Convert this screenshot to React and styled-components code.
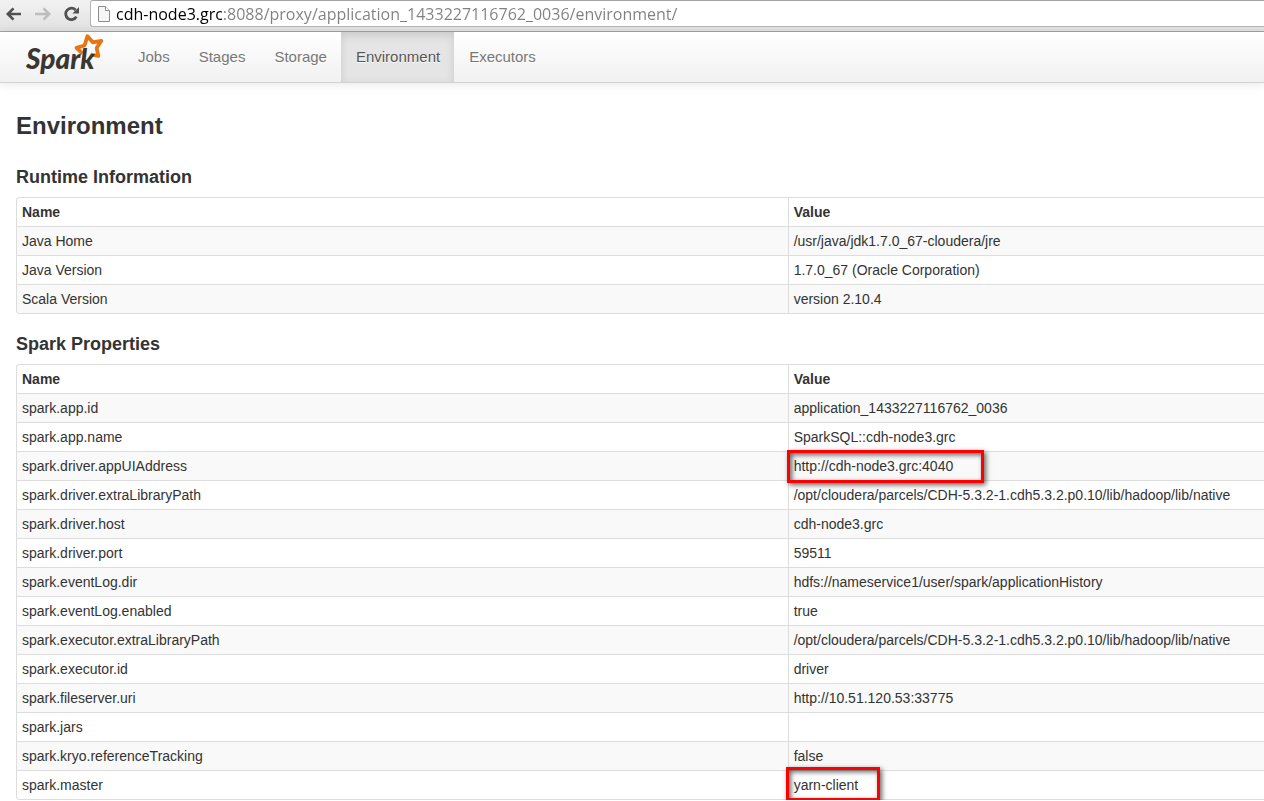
import React from 'react';
import styled, { createGlobalStyle, css } from 'styled-components';

const GlobalStyle = createGlobalStyle`
  *, *::before, *::after { box-sizing: border-box; }
  html { overflow-x: hidden; }
  body {
    margin: 0;
    background: #fff;
    color: #333;
    font: 14px/20px "Liberation Sans", Arial, sans-serif;
  }
`;

const Toolbar = styled.header`
  display: flex;
  height: 32px;
  padding-bottom: 4px;
  background: linear-gradient(#f2f2f2, #e1e1e1);
  border-bottom: 1px solid #a3a3a3;
`;

const ToolButtons = styled.div`
  display: flex;
  align-items: center;
  gap: 11px;
  width: 90px;
  padding-left: 5px;
  flex: none;
`;

const ToolButton = styled.button`
  display: flex;
  padding: 0;
  border: 0;
  background: none;
  color: ${(p) => (p.disabled ? '#bdbdbd' : '#505050')};
`;

const AddressBar = styled.label`
  display: flex;
  align-items: center;
  flex: 1;
  min-width: 0;
  padding-left: 7px;
  background: #fff;
  border: 1px solid #b4b4b4;
  border-top-color: #a3a3a3;
  border-right: 0;
  border-radius: 3px 0 0 3px;
`;

const AddressInput = styled.input`
  flex: 1;
  min-width: 0;
  height: 24px;
  margin-left: 6px;
  padding: 0;
  border: 0;
  outline: 0;
  font: 16px/24px "Open Sans", "Noto Sans", sans-serif;
  color: transparent;
  background: linear-gradient(90deg, #000 106px, #808080 106px);
  background-clip: text;
`;

const Navbar = styled.nav`
  display: flex;
  height: 51px;
  padding-left: 25px;
  background: linear-gradient(#fff, #f1f1f1);
  border-bottom: 1px solid #d2d2d2;
  box-shadow: 0 1px 10px rgba(0, 0, 0, 0.1);
`;

const Brand = styled.a`
  display: block;
  width: 98px;
  padding-top: 1px;
`;

const NavLink = styled.a`
  padding: 15px 14px 15px 15px;
  font-size: 15px;
  line-height: 20px;
  color: #777;
  text-decoration: none;
  text-shadow: 0 1px 0 #fff;
  ${(p) =>
    p.$active &&
    css`
      color: #555;
      background: #e5e5e5;
      box-shadow: inset 0 3px 8px rgba(0, 0, 0, 0.125);
    `}
`;

const Content = styled.main`
  padding: 23px 0 0 16px;
`;

const PageTitle = styled.h1`
  margin: 0 0 21px;
  font-size: 24px;
  line-height: 40px;
`;

const SectionTitle = styled.h2`
  margin: 0 0 10px;
  font-size: 18px;
  line-height: 20px;
`;

const Section = styled.section`
  & + & { margin-top: 20px; }
`;

const DataTable = styled.table`
  width: 100%;
  table-layout: fixed;
  border-collapse: separate;
  border-spacing: 0;
  border: 1px solid #ddd;
  border-right: 0;
  border-radius: 4px 0 0 4px;
`;

const cell = css`
  position: relative;
  padding: 4px 5px;
  height: 29px;
  text-align: left;
  border-top: 1px solid #ddd;
  &:first-child { width: 61.8%; }
  & + & { border-left: 1px solid #ddd; }
`;

const HeadCell = styled.th`
  ${cell}
  height: 28px;
  border-top: 0;
`;

const Cell = styled.td`
  ${cell}
`;

const Row = styled.tr`
  &:nth-child(odd) > td { background: #f9f9f9; }
  &:last-child > td:first-child { border-bottom-left-radius: 4px; }
`;

const Marker = styled.span`
  position: absolute;
  z-index: 1;
  top: ${(p) => (p.$tall ? -4 : -2)}px;
  left: ${(p) => (p.$tall ? -3 : -2)}px;
  width: ${(p) => (p.$tall ? 94 : 197)}px;
  height: ${(p) => (p.$tall ? 34 : 33)}px;
  border: 3px solid #f00;
  box-shadow: 2px 2px 5px rgba(0, 0, 0, 0.6), inset 2px 2px 5px rgba(0, 0, 0, 0.6);
  pointer-events: none;
`;

function ArrowIcon({ flip }) {
  return (
    <svg width="18" height="16" viewBox="0 0 18 16" fill="none" stroke="currentColor" strokeWidth="2.6">
      <path d={flip ? 'M1 8H15M9.5 2.3L15.2 8L9.5 13.7' : 'M16 8H3M8.5 2.3L2.8 8L8.5 13.7'} />
    </svg>
  );
}

function ReloadIcon() {
  return (
    <svg width="18" height="16" viewBox="0 0 18 16">
      <path d="M13.4 10.6A5.7 5.7 0 1 1 12.6 4" fill="none" stroke="currentColor" strokeWidth="2.8" />
      <path d="M16 1V7.6H9.4Z" fill="currentColor" />
    </svg>
  );
}

function PageIcon() {
  return (
    <svg width="12" height="16" viewBox="0 0 12 16">
      <path d="M.5 .5H7.5L11.5 4.5V15.5H.5Z" fill="#f6f6f6" stroke="#8c8c8c" />
      <path d="M7.5 .5V4.5H11.5" fill="#fff" stroke="#8c8c8c" />
    </svg>
  );
}

function SparkLogo() {
  return (
    <svg width="80" height="46" viewBox="0 0 80 46" role="img" aria-label="Spark">
      <path
        d="M57.500 20.500L51.500 14.800L59.500 12.500L62.500 3.200L67.800 9.300L76.300 7.800L71.700 15L73.300 23L65.500 21.500"
        fill="none"
        stroke="#e87511"
        strokeWidth="3.800"
        strokeLinejoin="round"
      />
      <text x="1" y="36" fontFamily="Lato" fontWeight="900" fontStyle="italic" fontSize="28" fill="#3a3632">
        Spark
      </text>
    </svg>
  );
}

const tabs = ['Jobs', 'Stages', 'Storage', 'Environment', 'Executors'];

const runtime = [
  ['Java Home', '/usr/java/jdk1.7.0_67-cloudera/jre'],
  ['Java Version', '1.7.0_67 (Oracle Corporation)'],
  ['Scala Version', 'version 2.10.4'],
];

const properties = [
  ['spark.app.id', 'application_1433227116762_0036'],
  ['spark.app.name', 'SparkSQL::cdh-node3.grc'],
  ['spark.driver.appUIAddress', 'http://cdh-node3.grc:4040', 'wide'],
  ['spark.driver.extraLibraryPath', '/opt/cloudera/parcels/CDH-5.3.2-1.cdh5.3.2.p0.10/lib/hadoop/lib/native'],
  ['spark.driver.host', 'cdh-node3.grc'],
  ['spark.driver.port', '59511'],
  ['spark.eventLog.dir', 'hdfs://nameservice1/user/spark/applicationHistory'],
  ['spark.eventLog.enabled', 'true'],
  ['spark.executor.extraLibraryPath', '/opt/cloudera/parcels/CDH-5.3.2-1.cdh5.3.2.p0.10/lib/hadoop/lib/native'],
  ['spark.executor.id', 'driver'],
  ['spark.fileserver.uri', 'http://10.51.120.53:33775'],
  ['spark.jars', ''],
  ['spark.kryo.referenceTracking', 'false'],
  ['spark.master', 'yarn-client', 'tall'],
];

function PropertySection({ title, rows }) {
  return (
    <Section>
      <SectionTitle>{title}</SectionTitle>
      <DataTable>
        <thead>
          <tr>
            <HeadCell scope="col">Name</HeadCell>
            <HeadCell scope="col">Value</HeadCell>
          </tr>
        </thead>
        <tbody>
          {rows.map(([name, value, marker]) => (
            <Row key={name}>
              <Cell>{name}</Cell>
              <Cell>
                {value}
                {marker && <Marker $tall={marker === 'tall'} />}
              </Cell>
            </Row>
          ))}
        </tbody>
      </DataTable>
    </Section>
  );
}

export default function App() {
  return (
    <>
      <GlobalStyle />
      <Toolbar>
        <ToolButtons>
          <ToolButton type="button" aria-label="Back"><ArrowIcon /></ToolButton>
          <ToolButton type="button" aria-label="Forward" disabled><ArrowIcon flip /></ToolButton>
          <ToolButton type="button" aria-label="Reload"><ReloadIcon /></ToolButton>
        </ToolButtons>
        <AddressBar>
          <PageIcon />
          <AddressInput
            type="text"
            aria-label="Address"
            defaultValue="cdh-node3.grc:8088/proxy/application_1433227116762_0036/environment/"
          />
        </AddressBar>
      </Toolbar>
      <Navbar>
        <Brand href="#"><SparkLogo /></Brand>
        {tabs.map((tab) => (
          <NavLink key={tab} href="#" $active={tab === 'Environment'}>{tab}</NavLink>
        ))}
      </Navbar>
      <Content>
        <PageTitle>Environment</PageTitle>
        <PropertySection title="Runtime Information" rows={runtime} />
        <PropertySection title="Spark Properties" rows={properties} />
      </Content>
    </>
  );
}
